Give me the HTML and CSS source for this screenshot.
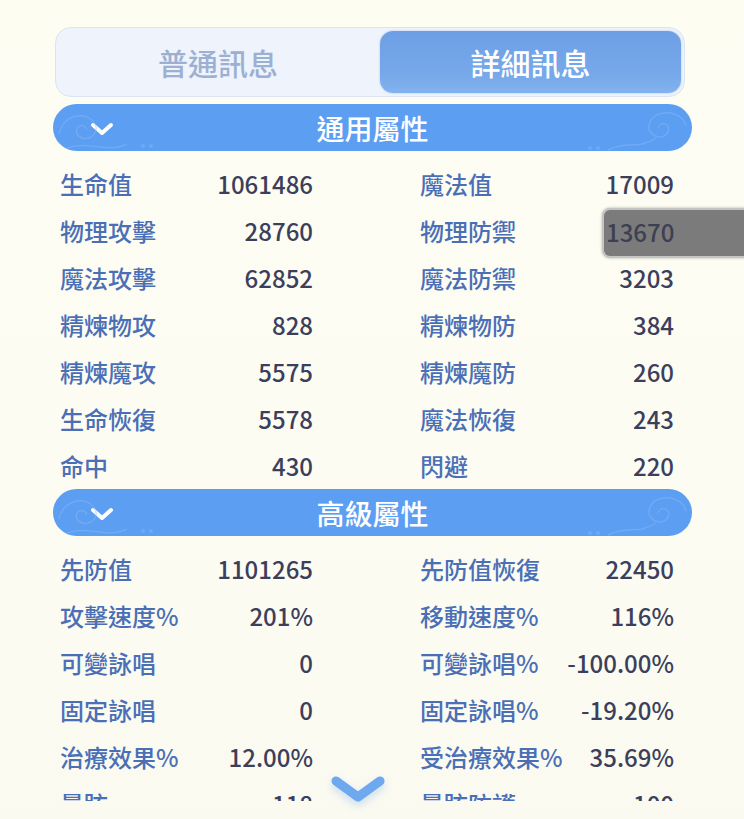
FILE: index.html
```html
<!DOCTYPE html>
<html lang="zh-Hant">
<head>
<meta charset="utf-8">
<link rel="stylesheet" href="styles.css">
</head>
<body>
<div class="panel">
  <div class="tabs">
    <div class="tab">普通訊息</div>
    <div class="tab active">詳細訊息</div>
  </div>
  <div class="scroll">
    <div class="section-head">
      <svg class="chev" viewBox="0 0 26 16" width="26" height="16"><path d="M4 4 L13 12 L22 4" fill="none" stroke="#fff" stroke-width="4" stroke-linecap="round" stroke-linejoin="round"/></svg>
      <svg class="swirl left" viewBox="0 0 110 48" width="110" height="48"><g fill="none" stroke="#8cbcf6" stroke-width="1.5"><path d="M2 30 C 6 10, 30 6, 38 20 C 44 32, 26 40, 20 30 C 16 22, 28 18, 30 26"/><path d="M10 44 C 30 36, 50 50, 70 40"/></g><circle cx="86" cy="42" r="2" fill="#8cbcf6"/><circle cx="94" cy="42" r="2" fill="#8cbcf6"/></svg>
      <span class="title">通用屬性</span>
      <svg class="swirl right" viewBox="0 0 110 48" width="110" height="48"><g fill="none" stroke="#8cbcf6" stroke-width="1.5"><path d="M108 22 C 104 6, 78 4, 72 18 C 66 32, 86 38, 90 28 C 94 20, 82 16, 80 24"/><path d="M30 46 C 50 36, 60 46, 78 34"/></g><circle cx="12" cy="44" r="2" fill="#8cbcf6"/><circle cx="20" cy="44" r="2" fill="#8cbcf6"/></svg>
    </div>
    <div class="grid">
      <div class="row"><span class="lbl">生命值</span><span class="val">1061486</span></div>
      <div class="row"><span class="lbl">魔法值</span><span class="val">17009</span></div>
      <div class="row"><span class="lbl">物理攻擊</span><span class="val">28760</span></div>
      <div class="row"><span class="lbl">物理防禦</span><span class="val hl-wrap"><span class="hl">13670</span></span></div>
      <div class="row"><span class="lbl">魔法攻擊</span><span class="val">62852</span></div>
      <div class="row"><span class="lbl">魔法防禦</span><span class="val">3203</span></div>
      <div class="row"><span class="lbl">精煉物攻</span><span class="val">828</span></div>
      <div class="row"><span class="lbl">精煉物防</span><span class="val">384</span></div>
      <div class="row"><span class="lbl">精煉魔攻</span><span class="val">5575</span></div>
      <div class="row"><span class="lbl">精煉魔防</span><span class="val">260</span></div>
      <div class="row"><span class="lbl">生命恢復</span><span class="val">5578</span></div>
      <div class="row"><span class="lbl">魔法恢復</span><span class="val">243</span></div>
      <div class="row"><span class="lbl">命中</span><span class="val">430</span></div>
      <div class="row"><span class="lbl">閃避</span><span class="val">220</span></div>
    </div>
    <div class="section-head">
      <svg class="chev" viewBox="0 0 26 16" width="26" height="16"><path d="M4 4 L13 12 L22 4" fill="none" stroke="#fff" stroke-width="4" stroke-linecap="round" stroke-linejoin="round"/></svg>
      <svg class="swirl left" viewBox="0 0 110 48" width="110" height="48"><g fill="none" stroke="#8cbcf6" stroke-width="1.5"><path d="M2 30 C 6 10, 30 6, 38 20 C 44 32, 26 40, 20 30 C 16 22, 28 18, 30 26"/><path d="M10 44 C 30 36, 50 50, 70 40"/></g><circle cx="86" cy="42" r="2" fill="#8cbcf6"/><circle cx="94" cy="42" r="2" fill="#8cbcf6"/></svg>
      <span class="title">高級屬性</span>
      <svg class="swirl right" viewBox="0 0 110 48" width="110" height="48"><g fill="none" stroke="#8cbcf6" stroke-width="1.5"><path d="M108 22 C 104 6, 78 4, 72 18 C 66 32, 86 38, 90 28 C 94 20, 82 16, 80 24"/><path d="M30 46 C 50 36, 60 46, 78 34"/></g><circle cx="12" cy="44" r="2" fill="#8cbcf6"/><circle cx="20" cy="44" r="2" fill="#8cbcf6"/></svg>
    </div>
    <div class="grid">
      <div class="row"><span class="lbl">先防值</span><span class="val">1101265</span></div>
      <div class="row"><span class="lbl">先防值恢復</span><span class="val">22450</span></div>
      <div class="row"><span class="lbl">攻擊速度%</span><span class="val">201%</span></div>
      <div class="row"><span class="lbl">移動速度%</span><span class="val">116%</span></div>
      <div class="row"><span class="lbl">可變詠唱</span><span class="val">0</span></div>
      <div class="row"><span class="lbl">可變詠唱%</span><span class="val">-100.00%</span></div>
      <div class="row"><span class="lbl">固定詠唱</span><span class="val">0</span></div>
      <div class="row"><span class="lbl">固定詠唱%</span><span class="val">-19.20%</span></div>
      <div class="row"><span class="lbl">治療效果%</span><span class="val">12.00%</span></div>
      <div class="row"><span class="lbl">受治療效果%</span><span class="val">35.69%</span></div>
      <div class="row"><span class="lbl">暈眩</span><span class="val">118</span></div>
      <div class="row"><span class="lbl">暈眩防護</span><span class="val">100</span></div>
    </div>
  </div>
  <svg class="more" viewBox="0 0 60 34" width="60" height="34"><path d="M8 7 L30 23 L52 7" fill="none" stroke="#6ea8ef" stroke-width="9" stroke-linecap="round" stroke-linejoin="round"/></svg>
</div>
</body>
</html>
```
FILE: styles.css
```css
html, body {
  margin: 0;
  padding: 0;
}
body {
  width: 744px;
  height: 819px;
  overflow: hidden;
  background: linear-gradient(180deg, #fdfdf2 0%, #fcfcf3 60%, #fbfaf1 100%);
  font-family: "Noto Sans CJK TC", "Noto Sans", sans-serif;
  font-weight: 500;
}
.panel {
  position: relative;
  height: 819px;
  padding-top: 27px;
  box-sizing: border-box;
}
.tabs {
  margin-left: 55px;
  width: 630px;
  height: 70px;
  box-sizing: border-box;
  border: 1.5px solid #dbe4f3;
  border-radius: 16px;
  background: #eef3fc;
  display: flex;
  padding: 3px 3px 3px 0;
}
.tab {
  flex: 0 0 324px;
  display: flex;
  align-items: center;
  justify-content: center;
  font-size: 30px;
  color: #9cb0d2;
  line-height: 1;
}
.tab.active {
  flex: 1 1 auto;
  background: linear-gradient(180deg, #6e9fe6 0%, #76a8ea 70%, #82b2ee 100%);
  border-radius: 13px;
  color: #ffffff;
  box-shadow: 0 0 2px rgba(90, 140, 220, 0.5);
}
.scroll {
  margin-top: 7px;
  height: 697px;
  overflow: hidden;
}
.section-head {
  position: relative;
  margin-left: 53px;
  width: 639px;
  height: 47px;
  border-radius: 24px;
  background: #5c9ef2;
  display: flex;
  align-items: center;
  justify-content: center;
  overflow: hidden;
}
.section-head .title {
  color: #ffffff;
  font-size: 28px;
  line-height: 1;
}
.section-head .chev {
  position: absolute;
  left: 36px;
  top: 17px;
}
.section-head .swirl {
  position: absolute;
  top: 0;
  opacity: 0.4;
}
.section-head .swirl.left { left: 4px; }
.section-head .swirl.right { right: 4px; }
.grid {
  display: grid;
  grid-template-columns: 253px 254px;
  column-gap: 107px;
  padding-left: 60px;
  padding-top: 9px;
}
.row {
  height: 47px;
  display: flex;
  align-items: center;
  justify-content: space-between;
  font-size: 24px;
  line-height: 1;
}
.lbl {
  color: #4a6fb6;
  white-space: nowrap;
}
.val {
  color: #3b3f5c;
  white-space: nowrap;
}
.hl-wrap {
  position: relative;
}
.hl {
  position: absolute;
  right: -72px;
  top: -11px;
  width: 144px;
  height: 50px;
  box-sizing: border-box;
  padding: 10px 0 0 2px;
  background: #7b7b7b;
  border: 2px solid #c4c4c4;
  border-right: none;
  border-radius: 8px 0 0 8px;
  color: #3d3f52;
  box-shadow: 0 0 3px rgba(0,0,0,0.3);
}
.hl-wrap::before {
  content: "13670";
  visibility: hidden;
}
.more {
  position: absolute;
  left: 328px;
  top: 774px;
  filter: drop-shadow(0 4px 4px rgba(110, 168, 239, 0.35));
}
```
